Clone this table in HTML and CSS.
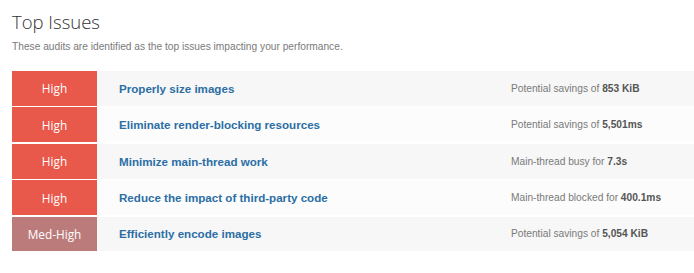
FILE: index.html
```html
<!DOCTYPE html>
<html>
<head>
<meta charset="utf-8">
<link rel="stylesheet" href="styles.css">
</head>
<body>
<section class="panel">
  <h2 class="title">Top Issues</h2>
  <p class="desc">These audits are identified as the top issues impacting your performance.</p>
  <div class="list">
    <div class="row odd">
      <div class="badge high">High</div>
      <div class="name">Properly size images</div>
      <div class="info">Potential savings of <b>853 KiB</b></div>
    </div>
    <div class="row even">
      <div class="badge high">High</div>
      <div class="name">Eliminate render-blocking resources</div>
      <div class="info">Potential savings of <b>5,501ms</b></div>
    </div>
    <div class="row odd">
      <div class="badge high">High</div>
      <div class="name">Minimize main-thread work</div>
      <div class="info">Main-thread busy for <b>7.3s</b></div>
    </div>
    <div class="row even">
      <div class="badge high">High</div>
      <div class="name">Reduce the impact of third-party code</div>
      <div class="info">Main-thread blocked for <b>400.1ms</b></div>
    </div>
    <div class="row odd">
      <div class="badge medhigh">Med-High</div>
      <div class="name">Efficiently encode images</div>
      <div class="info">Potential savings of <b>5,054 KiB</b></div>
    </div>
  </div>
</section>
</body>
</html>
```

FILE: styles.css
```css
html, body {
  margin: 0;
  padding: 0;
  background: #ffffff;
}
.panel {
  padding: 10px 0 0 12px;
  font-family: "Liberation Sans", Arial, sans-serif;
}
.title {
  margin: 0;
  font-family: "Open Sans", sans-serif;
  font-weight: 300;
  font-size: 18.5px;
  line-height: 24px;
  color: #333333;
}
.desc {
  margin: 6px 0 0 0;
  font-size: 10.2px;
  line-height: 14px;
  color: #7a7a7a;
}
.list {
  margin-top: 17px;
  display: flex;
  flex-direction: column;
  gap: 1.6px;
}
.row {
  display: flex;
  align-items: center;
  height: 34.8px;
}
.odd { background: #f7f7f7; }
.even { background: #fcfcfc; }
.badge {
  width: 85px;
  height: 100%;
  display: flex;
  align-items: center;
  justify-content: center;
  color: #ffffff;
  font-family: "Open Sans", sans-serif;
  font-size: 11.8px;
  flex: none;
}
.high { background: #e9594b; }
.medhigh { background: #bc7b7b; }
.name {
  margin-left: 22px;
  width: 392px;
  flex: none;
  font-weight: bold;
  font-size: 11.6px;
  color: #2b6ea5;
}
.info {
  font-size: 10.2px;
  color: #7a7a7a;
}
.info b {
  color: #555555;
}
```
